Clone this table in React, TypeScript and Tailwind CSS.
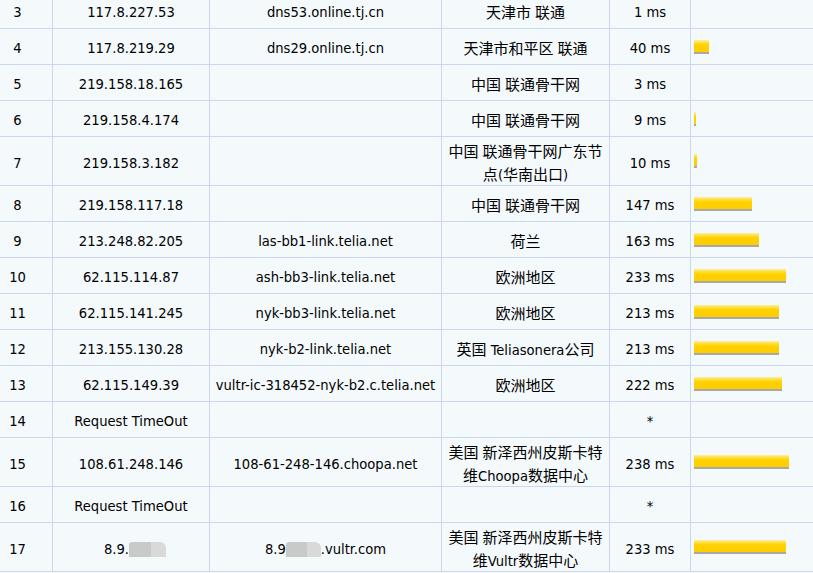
import React from "react";

type Row = {
  n: string;
  ip: React.ReactNode;
  host: React.ReactNode;
  loc: string[];
  ms: string;
  bar: number;
  tall?: boolean;
};

const Blur = ({ w }: { w: number }) => (
  <span
    className="inline-block h-[15px] align-[-3px] rounded-tr-[6px] rounded-tl-[3px] bg-[linear-gradient(90deg,#c9c9c9_0%,#c9c9c9_60%,#d9d9d9_60%,#d9d9d9_100%)]"
    style={{ width: w }}
  />
);

const rows: Row[] = [
  { n: "3", ip: "117.8.227.53", host: "dns53.online.tj.cn", loc: ["天津市 联通"], ms: "1 ms", bar: 0 },
  { n: "4", ip: "117.8.219.29", host: "dns29.online.tj.cn", loc: ["天津市和平区 联通"], ms: "40 ms", bar: 15 },
  { n: "5", ip: "219.158.18.165", host: "", loc: ["中国 联通骨干网"], ms: "3 ms", bar: 0 },
  { n: "6", ip: "219.158.4.174", host: "", loc: ["中国 联通骨干网"], ms: "9 ms", bar: 2 },
  { n: "7", ip: "219.158.3.182", host: "", loc: ["中国 联通骨干网广东节", "点(华南出口)"], ms: "10 ms", bar: 3, tall: true },
  { n: "8", ip: "219.158.117.18", host: "", loc: ["中国 联通骨干网"], ms: "147 ms", bar: 58 },
  { n: "9", ip: "213.248.82.205", host: "las-bb1-link.telia.net", loc: ["荷兰"], ms: "163 ms", bar: 65 },
  { n: "10", ip: "62.115.114.87", host: "ash-bb3-link.telia.net", loc: ["欧洲地区"], ms: "233 ms", bar: 92 },
  { n: "11", ip: "62.115.141.245", host: "nyk-bb3-link.telia.net", loc: ["欧洲地区"], ms: "213 ms", bar: 85 },
  { n: "12", ip: "213.155.130.28", host: "nyk-b2-link.telia.net", loc: ["英国 Teliasonera公司"], ms: "213 ms", bar: 85 },
  { n: "13", ip: "62.115.149.39", host: "vultr-ic-318452-nyk-b2.c.telia.net", loc: ["欧洲地区"], ms: "222 ms", bar: 88 },
  { n: "14", ip: "Request TimeOut", host: "", loc: [], ms: "*", bar: 0 },
  { n: "15", ip: "108.61.248.146", host: "108-61-248-146.choopa.net", loc: ["美国 新泽西州皮斯卡特", "维Choopa数据中心"], ms: "238 ms", bar: 95, tall: true },
  { n: "16", ip: "Request TimeOut", host: "", loc: [], ms: "*", bar: 0 },
  {
    n: "17",
    ip: (
      <span className="ml-[8px]">
        8.9.
        <Blur w={37} />
      </span>
    ),
    host: (
      <span>
        8.9
        <Blur w={35} />
        .vultr.com
      </span>
    ),
    loc: ["美国 新泽西州皮斯卡特", "维Vultr数据中心"],
    ms: "233 ms",
    bar: 92,
    tall: true,
  },
];

function Mixed({ text }: { text: string }) {
  const parts = text.split(/([\u3000-\u9fff\uff00-\uffef]+)/);
  return (
    <>
      {parts.map((p, i) =>
        /[\u3000-\u9fff\uff00-\uffef]/.test(p) ? (
          <span key={i} className="font-['Noto_Sans_CJK_SC',sans-serif] text-[15px]">
            {p}
          </span>
        ) : (
          <span key={i}>{p}</span>
        )
      )}
    </>
  );
}

function Bar({ w }: { w: number }) {
  if (!w) return null;
  return (
    <div
      className="h-[14px] border-b-2 border-[#a9a9a4] bg-[linear-gradient(180deg,#fff0a0_0%,#ffe04a_18%,#ffd200_40%,#ffcc00_100%)]"
      style={{ width: w }}
    />
  );
}

export default function App() {
  return (
    <div className="min-h-screen overflow-hidden bg-[#f4f9fb] text-[#000] font-['DejaVu_Sans_Condensed','DejaVu_Sans',sans-serif] font-stretch-condensed text-[14.6px] leading-[22px]">
      <div className="-mt-[7px] grid grid-cols-[52px_156px_231px_167px_80px_1fr] gap-px bg-[#c9d8ef] pb-px">
        {rows.map((r) => {
          const h = r.tall ? "h-[48px]" : "h-[35px]";
          const cell = `${h} bg-[#f4f9fb] flex items-center justify-center text-center pt-[3px] whitespace-nowrap`;
          return (
            <React.Fragment key={r.n}>
              <div className={`${cell} pr-[17px]`}>{r.n}</div>
              <div className={cell}>{r.ip}</div>
              <div className={cell}>{r.host}</div>
              <div className={`${cell} flex-col`}>
                {r.loc.map((l, i) => (
                  <div key={i} className="whitespace-nowrap">
                    <Mixed text={l} />
                  </div>
                ))}
              </div>
              <div className={cell}>{r.ms}</div>
              <div className={`${h} bg-[#f4f9fb] flex items-center pl-[3px]`}>
                <Bar w={r.bar} />
              </div>
            </React.Fragment>
          );
        })}
      </div>
    </div>
  );
}
